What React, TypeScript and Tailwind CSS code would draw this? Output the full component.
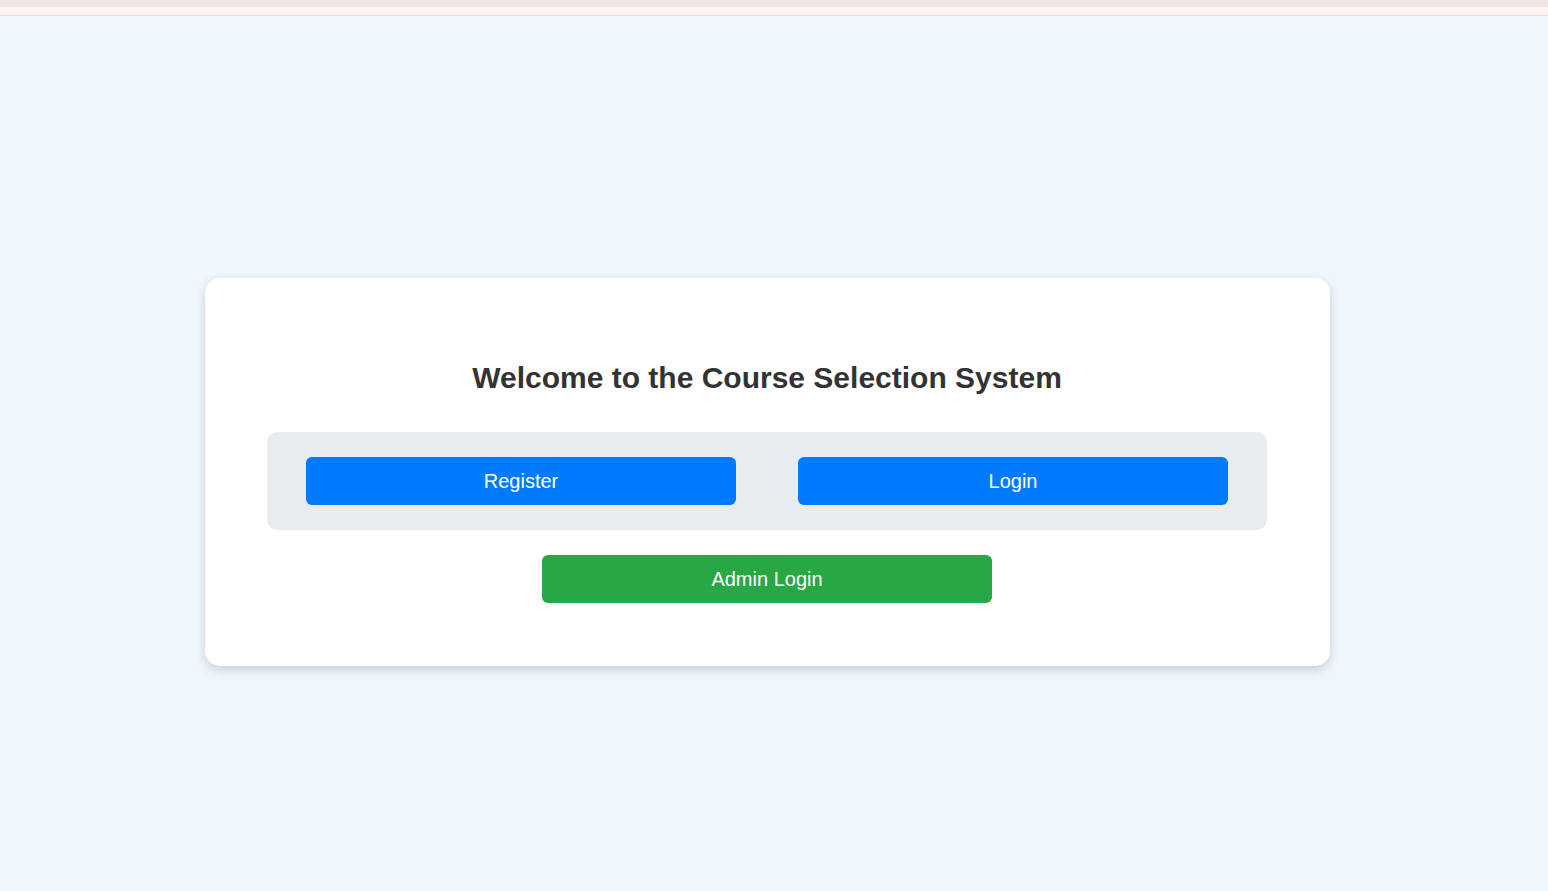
export default function App() {
  return (
    <div className="min-h-[891px] bg-[#eef6fe] font-['Liberation_Sans',Arial,sans-serif]">
      <div className="h-[7px] bg-[#f2e4e2]" />
      <div className="h-[9px] bg-[#fef6f3] border-b border-[#f0d8d0]" />

      <div className="flex justify-center pt-[262px] pr-[13px]">
        <div className="w-[1125px] bg-white rounded-[15px] shadow-[0_4px_12px_rgba(0,0,0,0.16)] pl-[62px] pr-[63px] pt-[83px] pb-[63px]">
          <h2 className="text-[30px] leading-[34px] font-bold text-[#333] text-center">
            Welcome to the Course Selection System
          </h2>

          <div className="mt-[37px] bg-[#e9ecef] rounded-[10px] px-[39px] py-[25px] flex justify-between">
            <button className="w-[430px] h-12 bg-[#007bff] text-white text-xl rounded-[6px]">Register</button>
            <button className="w-[430px] h-12 bg-[#007bff] text-white text-xl rounded-[6px]">Login</button>
          </div>

          <div className="mt-[25px] flex justify-center">
            <button className="w-[450px] h-12 bg-[#28a745] text-white text-xl rounded-[6px]">Admin Login</button>
          </div>
        </div>
      </div>
    </div>
  )
}
